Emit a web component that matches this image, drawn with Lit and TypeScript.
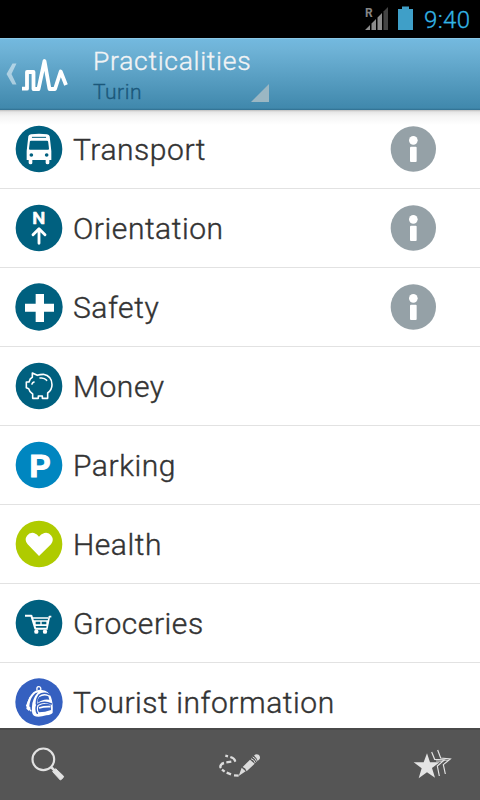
import { LitElement, html, svg, css } from "lit";
import { customElement } from "lit/decorators.js";

// Every category glyph is drawn on a 144-unit square with the disc centred at 72,72.
const disc = (fill: string, r = 70) => svg`<circle cx="72" cy="72" r=${r} fill=${fill} />`;

const TEAL = "#00607f";

const icons: Record<string, unknown> = {
  bus: svg`${disc(TEAL)}
    <path fill="#fff" d="M40 34Q41 29 48 28Q72 24 96 28Q103 29 104 34L109 78V105H103V114Q103 118 98 118Q92 118 92 114V105H52V114Q52 118 47 118Q41 118 41 114V105H35V78Z"/>
    <path fill="none" stroke=${TEAL} stroke-width="3" stroke-linecap="round" d="M52 37H92"/>
    <path fill=${TEAL} d="M48 47H96Q99 47 99.500 50L102 71Q102 74 99 74H45Q42 74 42 71L44.500 50Q45 47 48 47Z"/>
    <circle cx="49" cy="90" r="5.500" fill=${TEAL}/><circle cx="95" cy="90" r="5.500" fill=${TEAL}/>`,
  north: svg`${disc(TEAL)}
    <text x="51.500" y="60.500" textLength="39" lengthAdjust="spacingAndGlyphs" fill="#fff" stroke="#fff" stroke-width="2" stroke-linejoin="round" font-family="Roboto, sans-serif" font-weight="500" font-size="51">N</text>
    <path fill="none" stroke="#fff" stroke-width="8.500" stroke-linecap="round" stroke-linejoin="round" d="M72 118V76M54 92L72 74L90 92"/>`,
  cross: svg`${disc(TEAL, 71)}
    <path fill="#fff" d="M62 33H87V62H117V86H87V117H62V86H30V62H62Z"/>`,
  pig: svg`${disc(TEAL)}
    <path fill="none" stroke="#fff" stroke-width="4.800" stroke-linejoin="round" d="M52 33L67 40Q75 37 85 37Q111 42 111 68Q111 83 98 93V109H82V102H70V109H53V96Q43 90 41 80L34 77V60H42Q45 49 52 46Z"/>
    <path fill="none" stroke="#fff" stroke-width="4.500" stroke-linecap="round" d="M75 48Q88 46 95 55"/>
    <path fill="none" stroke="#fff" stroke-width="5" stroke-linecap="round" d="M51 66Q53 61 57 60"/>`,
  parking: svg`${disc("#0086c0")}
    <text x="43.500" y="107" fill="#fff" stroke="#fff" stroke-width="3.500" textLength="63" lengthAdjust="spacingAndGlyphs" font-family="Liberation Sans, sans-serif" font-weight="700" font-size="94">P</text>`,
  heart: svg`${disc("#afcb00")}
    <path fill="#fff" d="M72 108L38 73Q27 59 36 47Q44 36 57 39Q67 42 72 50Q77 42 88 39Q101 36 109 47Q118 59 108 73Z"/>`,
  cart: svg`${disc(TEAL)}
    <path fill="none" stroke="#fff" stroke-width="6" stroke-linejoin="round" d="M30 50H49L61 89H98"/>
    <path fill="none" stroke="#fff" stroke-width="5" stroke-linejoin="round" d="M51 57H99M109 53H103L96 87"/>
    <path fill="#fff" fill-rule="evenodd" d="M54 64H102L98 81H59ZM62 68V76H76V68ZM80 68V76H94V68Z"/>
    <circle cx="64" cy="98" r="6.500" fill="#fff"/><circle cx="90" cy="98" r="6.500" fill="#fff"/>`,
  backpack: svg`${disc("#3560c0", 71)}
    <path fill="none" stroke="#fff" stroke-width="4" d="M66 37Q64 25 72 26Q79 27 77 37"/>
    <path fill="#fff" d="M55 43Q66 33 81 36Q102 39 108 57Q115 76 113 104Q111 109 94 112Q68 120 57 113Q49 108 51 86Q52 62 69 43Q60 45 55 52Q44 66 43 85L47 90L42 99L34 92L36 82Q38 60 55 43Z"/>
    <path fill="none" stroke="#3560c0" stroke-width="4.500" stroke-linecap="round" d="M71 52Q85 41 103 50M71 53Q64 61 64 78M67 79Q88 67 109 78M66 79Q60 95 67 106"/>
    <path fill="#3560c0" d="M72 58Q87 49 100 55L103 65Q83 62 68 75Q66 65 72 58ZM71 83Q88 74 107 80L108 96Q90 103 72 103Q66 94 71 83Z"/>
    <path fill="none" stroke="#fff" stroke-width="4" d="M46 57L35 83L49 100"/>
    <path fill="none" stroke="#fff" stroke-width="5" d="M72 90Q88 85 106 86"/>`,
};

interface Category {
  icon: string;
  label: string;
  info?: boolean;
}

const categories: Category[] = [
  { icon: "bus", label: "Transport", info: true },
  { icon: "north", label: "Orientation", info: true },
  { icon: "cross", label: "Safety", info: true },
  { icon: "pig", label: "Money" },
  { icon: "parking", label: "Parking" },
  { icon: "heart", label: "Health" },
  { icon: "cart", label: "Groceries" },
  { icon: "backpack", label: "Tourist information" },
];

@customElement("status-bar")
export class StatusBar extends LitElement {
  static styles = css`
    :host {
      display: flex;
      justify-content: flex-end;
      align-items: center;
      height: 38px;
      flex: none;
      background: #000;
      color: #33b5e5;
      font: 350 24px/38px Roboto, sans-serif;
      -webkit-text-stroke: 0.3px;
      padding-right: 9.5px;
      box-sizing: border-box;
    }
    .time {
      padding-top: 2px;
      letter-spacing: 0.4px;
    }
    .status {
      flex: none;
      -webkit-text-stroke: 0;
    }
  `;
  render() {
    return html`
      <svg class="status" width="60" height="38" viewBox="0 0 60 38">
        <text x="1" y="17" fill="#858585" font-family="Roboto, sans-serif" font-weight="700" font-size="12">R</text>
        <path fill="#8c8c8c" d="M1 30L6 25V30ZM7.500 30V23.500L12 19V30ZM13.500 30V17.500L18 13V30Z" />
        <path fill="#444" d="M19.500 30V11.500L24 7V30Z" />
        <path fill="#3f9fc8" d="M34 9H38V6.500H45V9H49V30H34Z" />
      </svg>
      <span class="time">9:40</span>
    `;
  }
}

@customElement("title-bar")
export class TitleBar extends LitElement {
  static styles = css`
    :host {
      display: flex;
      height: 72px;
      flex: none;
      box-sizing: border-box;
      background: linear-gradient(#73b9df 0, #6fb3d7 10px, #4189ad 68px, #4189ad 69px, #2f6e8f 71px, #4b6979 72px);
      border-top: 1px solid #8ac7e6;
      font-family: Roboto, sans-serif;
      font-weight: 350;
      -webkit-text-stroke: 0.35px;
    }
    .home {
      flex: none;
      width: 93px;
    }
    .spinner {
      display: grid;
      grid-template-columns: 158px 18px;
      grid-template-rows: 43px 20px;
      align-items: end;
    }
    .title {
      color: #f1f3f5;
      font-size: 26.5px;
      line-height: 44px;
      letter-spacing: 0.7px;
      white-space: nowrap;
      grid-column: 1 / 3;
      padding-top: 1px;
      margin-bottom: -1px;
    }
    .place {
      color: #1b587b;
      font-size: 21px;
      line-height: 20px;
      letter-spacing: 0.5px;
    }
  `;
  render() {
    return html`
      <svg class="home" width="93" height="71" viewBox="0 39 93 71">
        <path fill="#fff" fill-opacity=".5" d="M12.500 63.500H16.500L11.500 74L16.500 84.500H12.500L6.500 74Z" />
        <path fill="none" stroke="#fff" stroke-width="3.800" stroke-linejoin="round" d="M22 88.700H27V72H33.500V89H38.500L44.500 61L49.500 89H55L60.700 71.500L66 85" />
      </svg>
      <div class="spinner">
        <div class="title">Practicalities</div>
        <div class="place">Turin</div>
        <svg width="18" height="18" viewBox="0 0 18 18">
          <path fill="#9bb7c3" d="M18 0V18H0Z" />
        </svg>
      </div>
    `;
  }
}

@customElement("category-row")
export class CategoryRow extends LitElement {
  static properties = { item: { attribute: false } };
  declare item: Category;
  static styles = css`
    :host {
      display: flex;
      align-items: center;
      height: 79px;
      flex: none;
      box-sizing: border-box;
      border-bottom: 1px solid #e2e2e2;
      padding: 0 43px 0 15px;
      font: 350 30px/40px Roboto, sans-serif;
      color: #333;
    }
    .label {
      flex: 1;
      padding: 2px 0 0 10px;
      letter-spacing: 0.55px;
      -webkit-text-stroke: 0.4px;
    }
    svg {
      flex: none;
    }
  `;
  render() {
    return html`
      <svg width="48" height="48" viewBox="0 0 144 144">${icons[this.item.icon]}</svg>
      <span class="label">${this.item.label}</span>
      ${this.item.info
        ? html`<svg width="48" height="48" viewBox="0 0 144 144">
            <circle cx="73" cy="72" r="68" fill="#95a1a7" />
            <circle cx="73" cy="46" r="13" fill="#fff" />
            <rect x="63" y="65" width="20" height="46" rx="3" fill="#fff" />
          </svg>`
        : null}
    `;
  }
}

@customElement("tool-bar")
export class ToolBar extends LitElement {
  static styles = css`
    :host {
      display: flex;
      justify-content: space-between;
      align-items: center;
      height: 72px;
      flex: none;
      box-sizing: border-box;
      background: #555;
      border-top: 2px solid #4a4a4a;
      padding: 0 13px 0 13px;
    }
  `;
  render() {
    return html`
      <svg width="70" height="70" viewBox="-21 24 210 210">
        <circle cx="70" cy="112" r="32.500" fill="none" stroke="#e2e2e2" stroke-width="6.500" />
        <path stroke="#e2e2e2" stroke-width="8" d="M92 134L104 146" />
        <path fill="#e2e2e2" stroke="#e2e2e2" stroke-width="3" stroke-linejoin="round" d="M98 149L107 140L131 163Q130 169 121 174Z" />
      </svg>
      <svg width="70" height="70" viewBox="0 -15 210 210">
        <path fill="none" stroke="#dcdcdc" stroke-width="7" d="M61 62L69 64M76 66Q89 70 90 77L87 79M79 80L64 82M57 84Q46 87 46 96L48 99M51 104L59 110M65 113L78 118M87 121L101 122" />
        <path fill="#dcdcdc" d="M101 123L110 98L122 109ZM113 96L135 74L149 86L125 109Q122 99 113 96ZM147 62Q153 55 161 59Q167 65 164 72L158 78Q156 68 147 62Z" />
        <path fill="none" stroke="#dcdcdc" stroke-width="3" d="M138 71Q148 74 151 84M143 66Q153 70 155 80" />
      </svg>
      <svg width="70" height="70" viewBox="-9 -15 210 210">
        <path fill="#e4e4e4" d="M81 55L90 82L119 82L96 99L105 128L81 112L56 130L65 100L41 82L71 82Z" />
        <path fill="none" stroke="#e4e4e4" stroke-width="3.500" d="M95 51L104 73L133 75L112 93L118 123M113 45L122 69L151 72L130 89L136 117" />
        <path fill="none" stroke="#e4e4e4" stroke-width="2.500" d="M108 78L126 79M127 75L144 76" />
      </svg>
    `;
  }
}

@customElement("app-root")
export class AppRoot extends LitElement {
  static styles = css`
    :host {
      display: flex;
      flex-direction: column;
      width: 480px;
      height: 800px;
      overflow: hidden;
      background: #fff;
    }
    .list {
      flex: 1;
      min-height: 0;
      overflow: hidden;
      display: flex;
      flex-direction: column;
      background: linear-gradient(#bdbdbd 0, #e6e6e6 2px, #f4f4f4 6px, #fff 15px);
    }
  `;
  render() {
    return html`
      <status-bar></status-bar>
      <title-bar></title-bar>
      <div class="list">${categories.map((c) => html`<category-row .item=${c}></category-row>`)}</div>
      <tool-bar></tool-bar>
    `;
  }
}
